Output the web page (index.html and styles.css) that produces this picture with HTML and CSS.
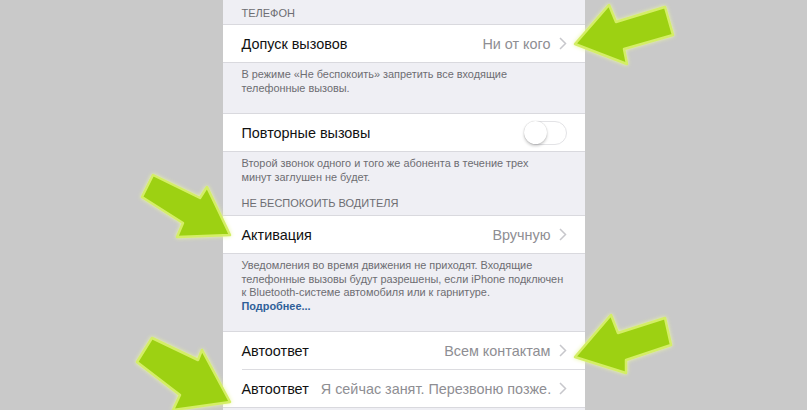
FILE: index.html
```html
<!DOCTYPE html>
<html lang="ru">
<head>
    <meta charset="UTF-8">
    <title>Не беспокоить</title>
    <link rel="stylesheet" href="styles.css">
</head>
<body>
    <div class="settings">
        <div class="group-header first">Телефон</div>
        <div class="group">
            <div class="cell">
                <span class="title">Допуск вызовов</span>
                <span class="value">Ни от кого</span>
                <svg class="chevron" viewBox="0 0 8 13"><polyline points="1,1 6.5,6.5 1,12"/></svg>
            </div>
        </div>
        <div class="group-footer">В режиме «Не беспокоить» запретить все входящие<br>телефонные вызовы.</div>

        <div class="group spaced">
            <div class="cell">
                <span class="title">Повторные вызовы</span>
                <span class="toggle"><span class="knob"></span></span>
            </div>
        </div>
        <div class="group-footer">Второй звонок одного и того же абонента в течение трех<br>минут заглушен не будет.</div>

        <div class="group-header">Не беспокоить водителя</div>
        <div class="group">
            <div class="cell">
                <span class="title">Активация</span>
                <span class="value">Вручную</span>
                <svg class="chevron" viewBox="0 0 8 13"><polyline points="1,1 6.5,6.5 1,12"/></svg>
            </div>
        </div>
        <div class="group-footer">Уведомления во время движения не приходят. Входящие<br>телефонные вызовы будут разрешены, если iPhone подключен<br>к Bluetooth-системе автомобиля или к гарнитуре.<br><a href="#">Подробнее...</a></div>

        <div class="group spaced">
            <div class="cell">
                <span class="title">Автоответ</span>
                <span class="value">Всем контактам</span>
                <svg class="chevron" viewBox="0 0 8 13"><polyline points="1,1 6.5,6.5 1,12"/></svg>
            </div>
            <div class="cell">
                <span class="title">Автоответ</span>
                <span class="value">Я сейчас занят. Перезвоню позже.</span>
                <svg class="chevron" viewBox="0 0 8 13"><polyline points="1,1 6.5,6.5 1,12"/></svg>
            </div>
        </div>
    </div>

    <!-- pointer arrows drawn over the settings -->
    <svg class="arrows" viewBox="0 0 807 410">
        <polygon points="575,44 609,5 616,22 665,7 673,35 624,49 627,64"/>
        <polygon points="230,235 177,237 183,223 142,197 153,175 200,198 207,187"/>
        <polygon points="230,402 173,410 180,395 137,362 152,338 198,360 202,350"/>
        <polygon points="575,357 611,315 618,333 665,318 671,345 626,360 626,373"/>
    </svg>
</body>
</html>
```

FILE: styles.css
```css
body {
    margin: 0;
    height: 410px;
    overflow: hidden;
    background-color: #c9c9c9;
    font-family: "Liberation Sans", Arial, sans-serif;
    display: flex;
    justify-content: center;
    position: relative;
}
.settings {
    width: 362px;
    height: 410px;
    background-color: #efeff4;
}
.group-header {
    height: 31px;
    box-sizing: border-box;
    padding: 0 19px 5px;
    display: flex;
    align-items: flex-end;
    font-size: 11px;
    line-height: 13px;
    color: #6d6d72;
    text-transform: uppercase;
}
.group-header.first {
    height: 24px;
    padding-bottom: 4px;
}
.group {
    background-color: white;
    border-top: 1px solid #d9d9de;
    border-bottom: 1px solid #d9d9de;
}
.group.spaced {
    margin-top: 17px;
}
.cell {
    height: 37px;
    margin-left: 19px;
    padding-right: 18px;
    display: flex;
    align-items: center;
    font-size: 14.4px;
}
.cell + .cell {
    border-top: 1px solid #dcdce0;
}
.title {
    color: #111;
    flex-shrink: 0;
}
.value {
    margin-left: auto;
    padding-left: 12px;
    color: #8e8e93;
    white-space: nowrap;
}
.chevron {
    width: 8px;
    height: 13px;
    margin-left: 8px;
    flex-shrink: 0;
    fill: none;
    stroke: #c7c7cc;
    stroke-width: 1.5;
}
.toggle {
    margin-left: auto;
    width: 43px;
    height: 24px;
    box-sizing: border-box;
    border: 1.5px solid #e3e3e6;
    border-radius: 13px;
    position: relative;
}
.knob {
    position: absolute;
    left: -1px;
    top: -1px;
    width: 23px;
    height: 23px;
    border-radius: 50%;
    background-color: white;
    box-shadow: 0 2px 3px rgba(0, 0, 0, 0.2), 0 0 1px rgba(0, 0, 0, 0.25);
}
.group-footer {
    padding: 5px 12px 0 19px;
    font-size: 10.9px;
    line-height: 13.5px;
    color: #6d6d72;
    white-space: nowrap;
}
.group-footer a {
    color: #2f5f99;
    font-weight: bold;
    text-decoration: none;
}
.group-footer + .group.spaced {
    margin-top: 18px;
}
.arrows {
    position: absolute;
    left: 0;
    top: 0;
    width: 807px;
    height: 410px;
    filter: drop-shadow(0 0 2px #eaf7a0);
}
.arrows polygon {
    fill: #9dd112;
    stroke: #d4ee66;
    stroke-width: 2.5;
    stroke-linejoin: round;
}
```
